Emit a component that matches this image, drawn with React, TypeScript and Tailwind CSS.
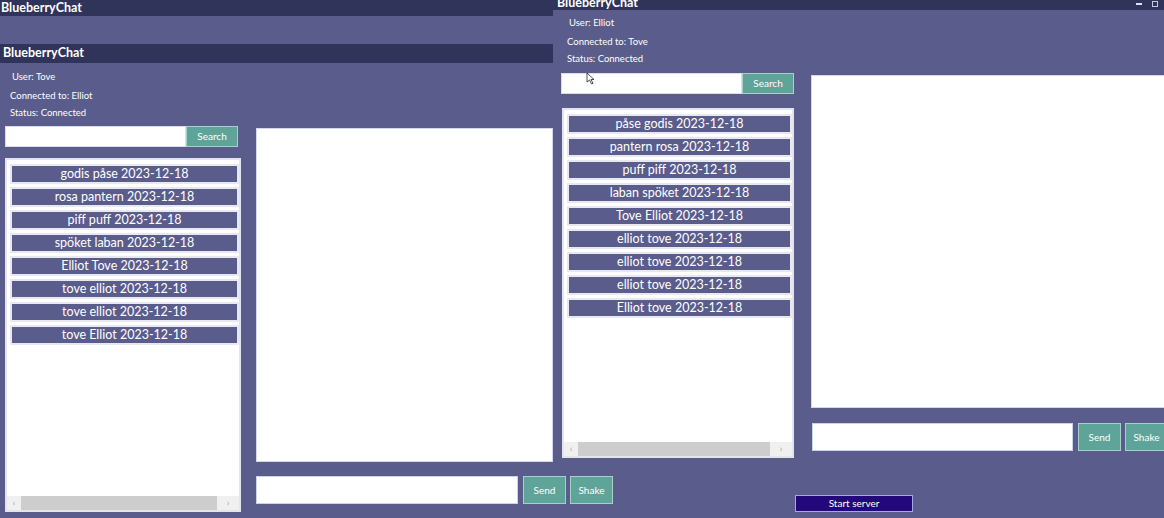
import React from 'react';

type ChatWindowProps = {
  user: string;
  peer: string;
  chats: string[];
};

const font = { fontFamily: 'Lato, "Noto Sans", sans-serif' };

const ScrollBar = () => (
  <div className="flex h-[14px] items-center bg-[#f0f0f0] text-[9px] text-[#a0a0a0]">
    <span className="w-[14px] text-center">‹</span>
    <div className="h-full flex-1 bg-[#cdcdcd]" />
    <span className="w-[22px] text-center">›</span>
  </div>
);

const ChatList = ({ chats, height }: { chats: string[]; height: string }) => (
  <div className={`flex flex-col border-2 border-[#e4e4ec] bg-white ${height}`}>
    <div className="flex flex-1 flex-col gap-[3px] pl-[3px] pt-[4px]">
      {chats.map((c, i) => (
        <div
          key={i}
          className="flex h-[20px] items-center justify-center border-2 border-[#e8e8f0] bg-[#5a5c8b] text-[12.5px] text-white"
        >
          {c}
        </div>
      ))}
    </div>
    <ScrollBar />
  </div>
);

const SearchRow = () => (
  <div className="flex h-[21px]">
    <div className="w-[181px] border border-[#dcdcec] bg-white" />
    <button className="w-[52px] border border-[#a8d0ca] bg-[#5fa498] text-[10px] text-white">
      Search
    </button>
  </div>
);

const InfoLines = ({ user, peer }: { user: string; peer: string }) => (
  <div className="text-[9.5px] text-white">
    <div className="flex h-[17px] items-center pl-[7px]">User: {user}</div>
    <div className="mt-[2px] flex h-[17px] items-center pl-[5px]">Connected to: {peer}</div>
    <div className="flex h-[17px] items-center pl-[5px]">Status: Connected</div>
  </div>
);

const MessageRow = ({ inputWidth }: { inputWidth: string }) => (
  <div className="flex h-[28px] gap-[4px]">
    <div className={`border border-[#c8d4ec] bg-white ${inputWidth}`} />
    <button className="ml-[1px] w-[43px] border border-[#a8d0ca] bg-[#5fa498] text-[10px] text-white">
      Send
    </button>
    <button className="w-[43px] border border-[#a8d0ca] bg-[#5fa498] text-[10px] text-white">
      Shake
    </button>
  </div>
);

const LeftWindow = ({ user, peer, chats }: ChatWindowProps) => (
  <div className="absolute left-0 top-0 h-[518px] w-[1164px] bg-[#5a5c8b]" style={font}>
    <div className="flex h-[16px] items-center bg-[#30335a] pl-[1px] text-[12.5px] font-bold text-white">
      BlueberryChat
    </div>
    <div className="h-[28px]" />
    <div className="flex h-[19px] items-center bg-[#30335a] pl-[3px] text-[12.5px] font-bold text-white">
      BlueberryChat
    </div>
    <div className="flex px-[5px]">
      <div className="w-[236px]">
        <div className="mt-[6px]">
          <InfoLines user={user} peer={peer} />
        </div>
        <div className="mt-[4px]">
          <SearchRow />
        </div>
        <div className="mt-[11px]">
          <ChatList chats={chats} height="h-[354px]" />
        </div>
      </div>
      <div className="ml-[15px]">
        <div className="mt-[65px] h-[334px] w-[297px] border border-[#d4d8ee] bg-white" />
        <div className="mt-[14px]">
          <MessageRow inputWidth="w-[262px]" />
        </div>
      </div>
      <div className="ml-[182px] mt-[432px] flex h-[17px] w-[118px] items-center justify-center border border-[#a9a6e8] bg-[#22087a] text-[10px] text-white">
        Start server
      </div>
    </div>
  </div>
);

const RightWindow = ({ user, peer, chats }: ChatWindowProps) => (
  <div className="absolute left-[553px] top-[-6px] h-[472px] w-[611px] bg-[#5a5c8b]" style={font}>
    <div className="flex h-[16px] items-center justify-between bg-[#30335a] pl-[4px] pr-[6px] text-[12.5px] font-bold text-white">
      <span className="pt-[2px]">BlueberryChat</span>
      <div className="flex items-center gap-[10px] pt-[4px]">
        <div className="h-[2px] w-[6px] bg-[#e0e0ee]" />
        <div className="h-[6px] w-[6px] border border-[#c8c8dc]" />
      </div>
    </div>
    <div className="flex pl-[8px]">
      <div className="w-[235px]">
        <div className="ml-[1px] mt-[5px]">
          <InfoLines user={user} peer={peer} />
        </div>
        <div className="mt-[5px]">
          <SearchRow />
        </div>
        <div className="ml-[1px] mt-[14px]">
          <ChatList chats={chats} height="h-[350px]" />
        </div>
      </div>
      <div className="ml-[17px]">
        <div className="mt-[65px] h-[333px] w-[360px] border border-[#d4d8ee] bg-white" />
        <div className="mt-[15px] pl-[1px]">
          <MessageRow inputWidth="w-[261px]" />
        </div>
      </div>
    </div>
    <svg className="absolute left-[33px] top-[78px]" width="9" height="13" viewBox="0 0 9 13">
      <path d="M1 1 L1 10 L3.5 8 L5.5 12 L7 11.3 L5 7.5 L8 7.5 Z" fill="#ffffff" stroke="#222" strokeWidth="0.8" />
    </svg>
  </div>
);

export default function App() {
  return (
    <div className="relative h-[518px] w-[1164px] overflow-hidden bg-[#5a5c8b]">
      <LeftWindow
        user="Tove"
        peer="Elliot"
        chats={[
          'godis påse 2023-12-18',
          'rosa pantern 2023-12-18',
          'piff puff 2023-12-18',
          'spöket laban 2023-12-18',
          'Elliot Tove 2023-12-18',
          'tove elliot 2023-12-18',
          'tove elliot 2023-12-18',
          'tove Elliot 2023-12-18',
        ]}
      />
      <RightWindow
        user="Elliot"
        peer="Tove"
        chats={[
          'påse godis 2023-12-18',
          'pantern rosa 2023-12-18',
          'puff piff 2023-12-18',
          'laban spöket 2023-12-18',
          'Tove Elliot 2023-12-18',
          'elliot tove 2023-12-18',
          'elliot tove 2023-12-18',
          'elliot tove 2023-12-18',
          'Elliot tove 2023-12-18',
        ]}
      />
    </div>
  );
}
